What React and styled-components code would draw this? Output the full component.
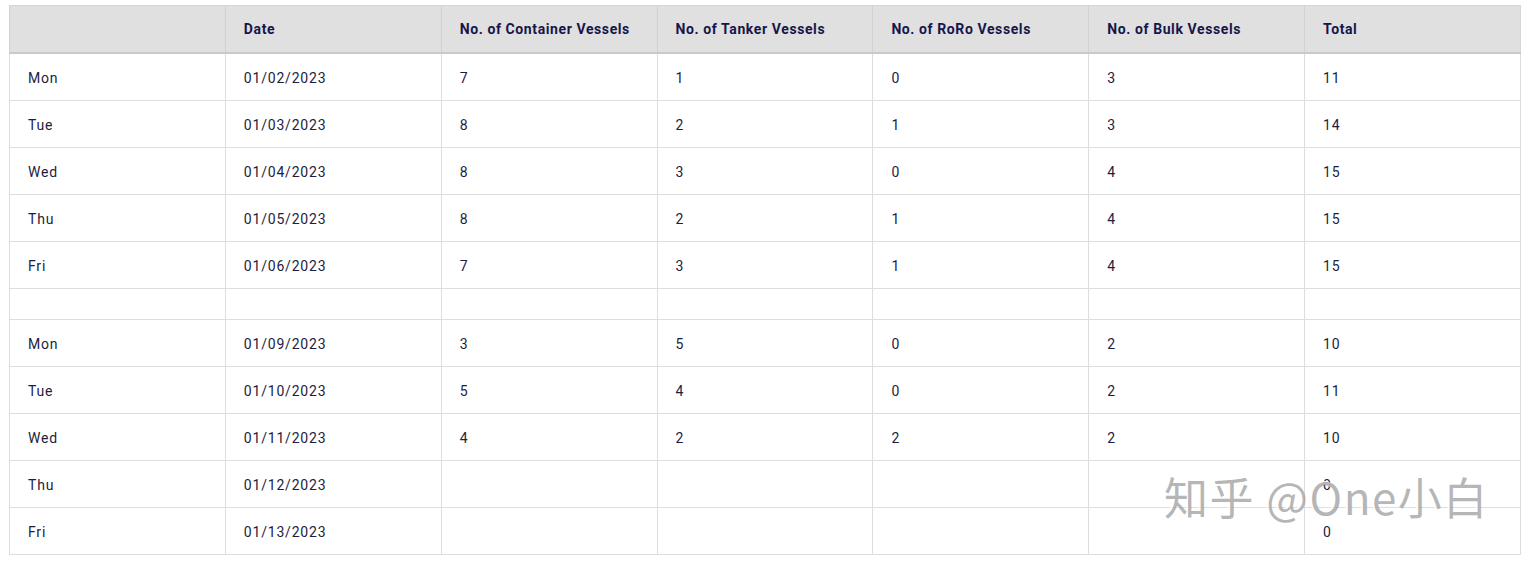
import React from 'react';
import styled, { createGlobalStyle } from 'styled-components';

const GlobalStyle = createGlobalStyle`
  body {
    margin: 0;
    background: #ffffff;
    font-family: Roboto, "Liberation Sans", sans-serif;
  }
`;

const Page = styled.div`
  position: relative;
  padding: 5px 8px 0 9px;
`;

const Table = styled.table`
  width: 1512px;
  border-collapse: collapse;
  table-layout: fixed;
  color: #1d1d40;
  font-size: 14px;
  border: 1px solid #d6d6d6;
`;

const HeadCell = styled.th`
  height: 46px;
  padding: 0 0 0 18px;
  text-align: left;
  font-weight: 700;
  letter-spacing: 0.6px;
  color: #16164a;
  background: #e0e0e0;
  border-left: 1px solid #d2d2d2;
  border-bottom: 2px solid #c9c9c9;
`;

const Cell = styled.td`
  height: ${p => (p.$spacer ? '28px' : '44px')};
  padding: 2px 0 0 18px;
  border: 1px solid #dedede;
  letter-spacing: 0.8px;
`;

const Watermark = styled.div`
  position: absolute;
  left: 1164px;
  top: 464px;
  font-family: "Noto Sans CJK SC", sans-serif;
  font-size: 44px;
  font-weight: 400;
  letter-spacing: 1.5px;
  color: rgba(150, 150, 150, 0.7);
  text-shadow: -2px -1px 0 rgba(255, 255, 255, 0.9);
  pointer-events: none;
`;

const headers = ['', 'Date', 'No. of Container Vessels', 'No. of Tanker Vessels', 'No. of RoRo Vessels', 'No. of Bulk Vessels', 'Total'];

const rows = [
  ['Mon', '01/02/2023', '7', '1', '0', '3', '11'],
  ['Tue', '01/03/2023', '8', '2', '1', '3', '14'],
  ['Wed', '01/04/2023', '8', '3', '0', '4', '15'],
  ['Thu', '01/05/2023', '8', '2', '1', '4', '15'],
  ['Fri', '01/06/2023', '7', '3', '1', '4', '15'],
  null,
  ['Mon', '01/09/2023', '3', '5', '0', '2', '10'],
  ['Tue', '01/10/2023', '5', '4', '0', '2', '11'],
  ['Wed', '01/11/2023', '4', '2', '2', '2', '10'],
  ['Thu', '01/12/2023', '', '', '', '', '0'],
  ['Fri', '01/13/2023', '', '', '', '', '0'],
];

export default function App() {
  return (
    <Page>
      <GlobalStyle />
      <Table>
        <thead>
          <tr>
            {headers.map((h, i) => <HeadCell key={i}>{h}</HeadCell>)}
          </tr>
        </thead>
        <tbody>
          {rows.map((r, i) => (
            <tr key={i}>
              {(r || headers.map(() => '')).map((c, j) => (
                <Cell key={j} $spacer={!r}>{c}</Cell>
              ))}
            </tr>
          ))}
        </tbody>
      </Table>
      <Watermark>知乎 @One小白</Watermark>
    </Page>
  );
}
